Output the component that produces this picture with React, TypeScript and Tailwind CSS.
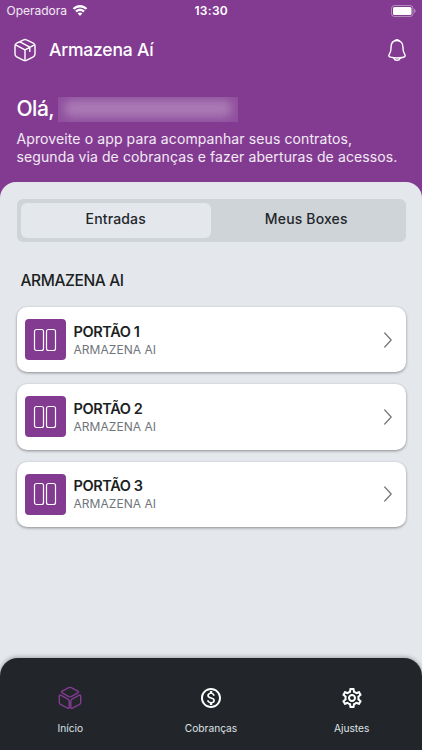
import { MdOutlineMonetizationOn, MdOutlineSettings } from "react-icons/md";

const gates = [
  { name: "PORTÃO 1", unit: "ARMAZENA AI" },
  { name: "PORTÃO 2", unit: "ARMAZENA AI" },
  { name: "PORTÃO 3", unit: "ARMAZENA AI" },
];

function WifiIcon() {
  return (
    <svg viewBox="0 0 16 12" className="h-3 w-4" fill="currentColor">
      <path d="M8 2.400c2.100 0 4 .8 5.500 2.200.1.1.3.1.4 0l1.100-1.100c.2-.2.2-.4 0-.5C11-.9 5-.9 1 3c-.2.1-.2.3 0 .5l1.100 1.100c.1.1.3.1.4 0C4 3.200 5.900 2.400 8 2.400Z" />
      <path d="M8 6c1.200 0 2.200.4 3 1.200.1.1.3.1.4 0l1.200-1.200c.1-.1.1-.3 0-.4-2.600-2.400-6.600-2.400-9.200 0-.1.1-.1.3 0 .4l1.200 1.200c.1.1.3.1.4 0C5.800 6.400 6.800 6 8 6Z" />
      <path d="M10.300 8.600c.1-.1.1-.3 0-.4-1.300-1.100-3.300-1.100-4.600 0-.1.1-.1.3 0 .4l2.100 2.100c.1.1.3.1.4 0l2.100-2.100Z" />
    </svg>
  );
}

function BatteryIcon() {
  return (
    <svg viewBox="0 0 25 12" className="h-3 w-[25px]">
      <rect x="0.5" y="0.5" width="21.5" height="11" rx="3" fill="none" stroke="#fff" strokeOpacity="0.4" />
      <rect x="2" y="2" width="18.5" height="8" rx="1.5" fill="#fff" />
      <path d="M23.300 4v4c1.500-.6 1.500-3.400 0-4Z" fill="#fff" fillOpacity="0.6" />
    </svg>
  );
}

function PackageIcon() {
  return (
    <svg
      viewBox="0 0 24 24"
      className="size-6"
      fill="none"
      stroke="currentColor"
      strokeWidth="1.4"
      strokeLinecap="round"
      strokeLinejoin="round"
    >
      <path d="M10.600 1.900q1.400-.8 2.800 0l6.900 3.300q1.700.9 1.700 2.700v8.200q0 1.800-1.700 2.700l-6.900 3.500q-1.400.7-2.800 0l-6.900-3.500Q2 17.900 2 16.100V7.900q0-1.800 1.700-2.700Z" />
      <path d="m2.500 6.800 9.500 5 9.500-5M12 11.800v10.700M7 3.800l9.800 5.300v4.300" />
    </svg>
  );
}

function BellIcon() {
  return (
    <svg
      viewBox="0 0 20 24"
      className="h-6 w-5"
      fill="none"
      stroke="currentColor"
      strokeWidth="1.4"
      strokeLinecap="round"
      strokeLinejoin="round"
    >
      <path d="M10 2.500c-3.900 0-5.900 2.900-5.900 6.500 0 3.500-.4 5.100-1.600 6.800-1.200 1.800-.8 2.900 1 3.400 4.300 1.100 8.700 1.100 13 0 1.800-.5 2.200-1.600 1-3.400-1.200-1.700-1.600-3.300-1.600-6.800 0-3.600-2-6.500-5.900-6.500Z" />
      <path d="M8 2.700c.5-1.500 3.500-1.500 4 0M6.900 20.200c.8 2.700 5.400 2.700 6.200 0" />
    </svg>
  );
}

function GateIcon() {
  return (
    <svg viewBox="0 0 24 24" className="size-6" fill="none" stroke="currentColor" strokeWidth="1.2">
      <rect x="1.500" y="1.500" width="9" height="21" rx="2" />
      <rect x="13.500" y="1.500" width="9" height="21" rx="2" />
    </svg>
  );
}

function BoxesIcon() {
  return (
    <svg
      viewBox="0 0 24 24"
      className="size-6"
      fill="none"
      stroke="currentColor"
      strokeWidth="1.4"
      strokeLinejoin="round"
    >
      <path d="M10.800 1.700q1.200-.6 2.400 0l6.600 3.400q1.500.9 0 1.800l-6.600 3.700q-1.200.6-2.400 0L4.200 6.900q-1.500-.9 0-1.800Z" />
      <path d="M1.300 10.400q0-2 1.800-1.100l6.500 3.500q1.600.8 1.600 2.500v5.900q0 1.700-1.500.9l-6.900-3.400q-1.500-.8-1.500-2.200Z" />
      <path d="M22.700 10.400q0-2-1.800-1.100l-6.500 3.500q-1.600.8-1.600 2.500v5.900q0 1.700 1.500.9l6.900-3.400q1.500-.8 1.500-2.200Z" />
    </svg>
  );
}

function Header() {
  return (
    <header className="h-[182px] text-white">
      <div className="grid h-[22px] grid-cols-3 items-center pl-[6.500px] pr-[6px] text-[12px]">
        <div className="flex items-center gap-[5px]">
          <span className="text-white/90">Operadora</span>
          <WifiIcon />
        </div>
        <span className="text-center font-semibold tracking-[0.3px]">13:30</span>
        <div className="flex justify-end">
          <BatteryIcon />
        </div>
      </div>
      <div className="flex h-14 items-center pl-[13px] pr-[15px]">
        <PackageIcon />
        <h1 className="ml-3 text-[17.5px] font-medium tracking-[-0.2px]">Armazena Aí</h1>
        <div className="ml-auto">
          <BellIcon />
        </div>
      </div>
      <div className="px-[16.5px] pt-[18px]">
        <div className="flex h-[26px] items-center gap-1">
          <h2 className="text-[21px] font-medium tracking-[-0.5px]">Olá,</h2>
          <div className="h-[25px] w-[180px] overflow-hidden bg-white/10">
            <div className="mx-1.5 mt-[3px] h-[17px] rounded-lg bg-white/25 blur-[5px]" />
          </div>
        </div>
        <p className="mt-2 whitespace-nowrap text-[14px] leading-[17.5px] tracking-[0.11px] text-white/90">
          Aproveite o app para acompanhar seus contratos,
          <br />
          segunda via de cobranças e fazer aberturas de acessos.
        </p>
      </div>
    </header>
  );
}

function BottomNav() {
  return (
    <nav className="grid h-[92px] grid-cols-3 rounded-t-[18px] bg-[#22262b] pt-7 text-[10.2px] text-[#dfe2e5] shadow-[0_-1px_4px_rgba(0,0,0,0.3)]">
      <div className="flex flex-col items-center">
        <span className="text-[#833b92]">
          <BoxesIcon />
        </span>
        <span className="mt-[11px]">Início</span>
      </div>
      <div className="flex flex-col items-center">
        <MdOutlineMonetizationOn className="size-6 text-white" />
        <span className="mt-[11px]">Cobranças</span>
      </div>
      <div className="flex flex-col items-center">
        <MdOutlineSettings className="size-6 text-white" />
        <span className="mt-[11px]">Ajustes</span>
      </div>
    </nav>
  );
}

export default function App() {
  return (
    <div className="flex h-[750px] w-[422px] flex-col overflow-hidden bg-[#833b92] font-['Inter',sans-serif]">
      <Header />
      <div className="flex flex-1 flex-col rounded-t-[16px] bg-[#e4e7ec]">
        <main className="flex-1 px-[16.5px] pt-[17px]">
          <div className="grid h-[42.5px] grid-cols-2 rounded-md bg-[#cfd4d8] p-1 text-center text-[14px] font-medium tracking-[0.15px] text-[#22262b]">
            <div className="rounded-md bg-[#e4e7ec] leading-[32px]">Entradas</div>
            <div className="leading-[32px]">Meus Boxes</div>
          </div>
          <h3 className="ml-[4px] mt-[28px] text-[15.5px] font-medium leading-[22px] tracking-[-0.4px] text-[#1c1f23]">
            ARMAZENA AI
          </h3>
          <ul className="mt-[15.5px] space-y-3">
            {gates.map((gate) => (
              <li
                key={gate.name}
                className="flex h-[65.3px] items-center rounded-[10px] bg-white px-[8px] shadow-[0_1px_3px_rgba(0,0,0,0.4)]"
              >
                <div className="flex size-[41px] items-center justify-center rounded-[4px] bg-[#833b92] text-white">
                  <GateIcon />
                </div>
                <div className="ml-2 pt-[2.5px]">
                  <p className="text-[14.5px] font-semibold leading-[18px] tracking-[-0.4px] text-[#1c1f23]">
                    {gate.name}
                  </p>
                  <p className="text-[12px] leading-[18px] tracking-[0.05px] text-[#6f757b]">{gate.unit}</p>
                </div>
                <svg
                  viewBox="0 0 8 16"
                  className="ml-auto mr-[6px] h-4 w-2"
                  fill="none"
                  stroke="#70767c"
                  strokeWidth="1.2"
                  strokeLinecap="round"
                  strokeLinejoin="round"
                >
                  <path d="m.7 1 6.500 7-6.500 7" />
                </svg>
              </li>
            ))}
          </ul>
        </main>
        <BottomNav />
      </div>
    </div>
  );
}
